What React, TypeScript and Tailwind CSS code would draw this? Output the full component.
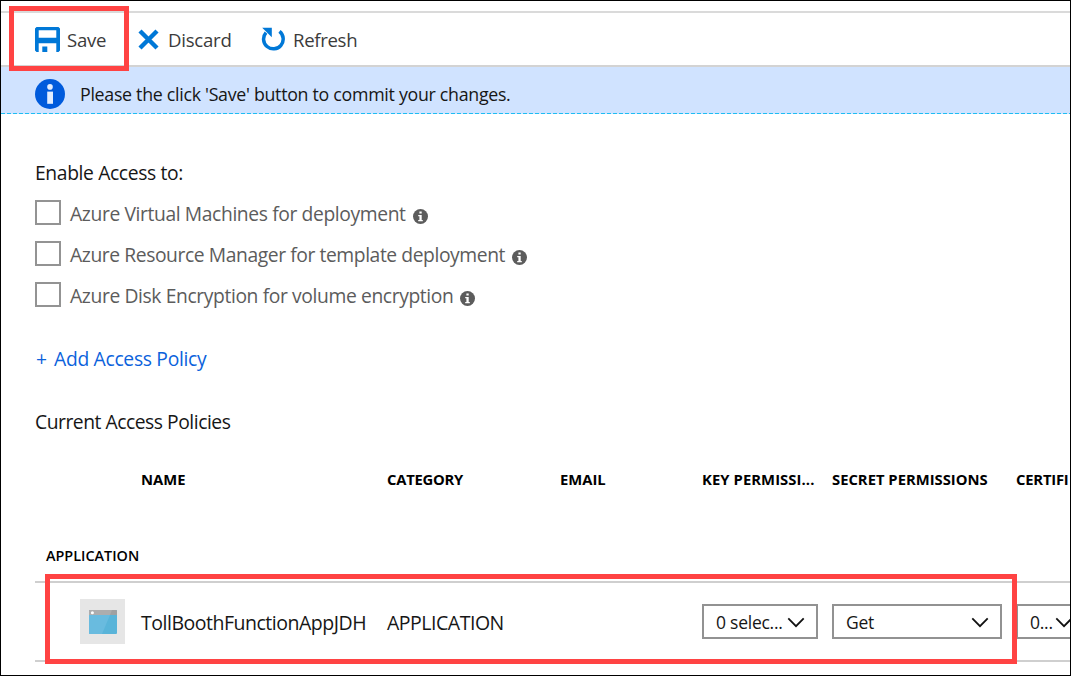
import React from "react";

function InfoDot({ className }: { className: string }) {
  return (
    <svg viewBox="0 0 30 30" className={className}>
      <circle cx="15" cy="15" r="15" fill="currentColor" />
      <circle cx="15" cy="7.9" r="2.8" fill="#e3eeff" />
      <path d="M12.2 12.6h5.8v12.2h-5.8z" fill="#e3eeff" />
    </svg>
  );
}

function SmallInfo() {
  return (
    <svg viewBox="0 0 15 15" className="mt-[6px] h-[15px] w-[15px] shrink-0">
      <circle cx="7.5" cy="7.5" r="7.5" fill="#5c5c5c" />
      <path d="M6.4 2.6h2.3v2H6.4zM5.2 5.9h3.5v5h1.1v1.3H5.2v-1.3h1.2V7.2H5.2z" fill="#fff" />
    </svg>
  );
}

function Chevron() {
  return (
    <svg viewBox="0 0 18 12" className="h-3 w-[18px] shrink-0" fill="none" stroke="#111" strokeWidth="1.8">
      <path d="M1.3 2.4 9 10.2l7.7-7.8" />
    </svg>
  );
}

function Check({ label, tracking }: { label: string; tracking: string }) {
  return (
    <div className="flex h-[41px] items-start">
      <div className="mt-px h-[25px] w-[26px] shrink-0 border-2 border-[#939393]" />
      <span className={"ml-[9px] mr-[7px] mt-px text-[19.3px] leading-[28px] text-[#5c5c5c] " + tracking}>{label}</span>
      <div className="pt-[4px]">
        <SmallInfo />
      </div>
    </div>
  );
}

function Select({ label, box }: { label: string; box: string }) {
  return (
    <div
      className={
        "flex h-[35px] shrink-0 items-center justify-between border-2 border-[#929292] bg-white pl-3 pr-[11px] text-[17.5px] tracking-[-0.25px] text-[#161616] " +
        box
      }
    >
      <span className="pt-[2px]">{label}</span>
      <Chevron />
    </div>
  );
}

export default function App() {
  return (
    <div className="relative flex h-[676px] w-[1071px] flex-col overflow-hidden whitespace-nowrap border border-black bg-white font-['Open_Sans',sans-serif] text-[#161616]">
      <div className="mt-[10px] flex h-[54px] shrink-0 items-center border-t-2 border-[#dadada] pl-[34px] text-[18.6px] tracking-[-0.25px] text-[#3b3b3b]">
        <svg viewBox="0 0 25 25" className="h-[25px] w-[25px]">
          <path
            fill="#0078d7"
            fillRule="evenodd"
            d="M1.5 0h22L25 1.5v22L23.5 25h-2.2v-8.7H3.7V25H1.5L0 23.5V1.5zM3.7 3.2v7.6h17.6V3.2zM7.3 19.5h5V25h-5z"
          />
        </svg>
        <span className="ml-[7px] w-[40px] pt-[2px]">Save</span>
        <svg viewBox="0 0 21 21" className="ml-[31px] h-[21px] w-[21px]" stroke="#0078d7" strokeWidth="4.4">
          <path d="M2 2l17 17M19 2 2 19" />
        </svg>
        <span className="ml-[9px] w-[64px] pt-[2px]">Discard</span>
        <svg viewBox="0 0 24 25" className="ml-[29px] h-[25px] w-6" fill="none">
          <path d="M18.5 4.4A9.8 9.8 0 1 1 5 5.6" stroke="#0078d7" strokeWidth="3.5" />
          <path d="M1.2.8h9.6v9.4z" fill="#0078d7" />
        </svg>
        <span className="ml-[8px] pt-[2px] tracking-[-0.32px]">Refresh</span>
      </div>

      <div className="flex h-[49px] shrink-0 flex-col border-t-2 border-t-[#d3d3d3] bg-[#d0e3ff]">
        <div className="flex h-[46px] items-center pl-[34px] pt-[8px]">
          <InfoDot className="h-[30px] w-[30px] text-[#005bdc]" />
          <span className="ml-[15px] pt-px text-[17.8px] tracking-[-0.29px]">
            Please the click 'Save' button to commit your changes.
          </span>
        </div>
        <div className="h-px bg-[repeating-linear-gradient(90deg,#1fbdf3_0px,#1fbdf3_4px,#d0e3ff_4px,#d0e3ff_6px)]" />
      </div>

      <div className="flex flex-col pl-[34px]">
        <div className="mt-[45px] h-[28px] text-[19.3px] leading-[28px] tracking-[-0.37px]">Enable Access to:</div>
        <div className="mt-[12px] flex flex-col">
          <Check label="Azure Virtual Machines for deployment" tracking="tracking-[-0.39px]" />
          <Check label="Azure Resource Manager for template deployment" tracking="tracking-[-0.42px]" />
          <Check label="Azure Disk Encryption for volume encryption" tracking="tracking-[-0.39px]" />
        </div>
        <div className="mt-[23px] flex h-[28px] text-[19.3px] leading-[28px] tracking-[-0.3px] text-[#0b62dc]">
          <span className="w-[19px] pl-px">+</span>
          <span>Add Access Policy</span>
        </div>
        <div className="mt-[35px] h-[28px] text-[19.3px] leading-[28px] tracking-[-0.47px]">Current Access Policies</div>

        <div className="mt-[33px] grid h-[20px] grid-cols-[106px_246px_173px_142px_130px_184px_54px] text-[14.8px] font-bold leading-[20px] text-black">
          <span />
          <span>NAME</span>
          <span className="tracking-[-0.25px]">CATEGORY</span>
          <span>EMAIL</span>
          <span className="tracking-[0.08px]">KEY PERMISSI...</span>
          <span>SECRET PERMISSIONS</span>
          <span className="tracking-[-0.2px]">CERTIFI</span>
        </div>

        <div className="mt-[57px] h-[20px] pl-[11px] text-[14.4px] font-semibold leading-[20px] text-black">APPLICATION</div>

        <div className="mt-[15px] grid h-[81px] grid-cols-[106px_246px_315px_130px_184px_100px] items-center border-b-2 border-t-2 border-[#cfcfcf] text-[19.5px] tracking-[-0.48px]">
          <div className="pl-[45px]">
            <div className="flex h-[45px] w-[45px] items-center justify-center bg-[#e6e6e6]">
              <svg viewBox="0 0 28 24" className="h-6 w-7">
                <rect width="28" height="24" rx="1" fill="#59b4d9" />
                <path d="M0 5h21L13 24H1a1 1 0 0 1-1-1z" fill="#69bbdf" />
                <path d="M1 0h26a1 1 0 0 1 1 1v4H0V1a1 1 0 0 1 1-1z" fill="#a0a1a2" />
                <path d="M1 0h22l-2 5H0V1a1 1 0 0 1 1-1z" fill="#adadae" />
                <circle cx="3.4" cy="2.8" r="1.5" fill="#fff" />
              </svg>
            </div>
          </div>
          <span className="pt-[2px]">TollBoothFunctionAppJDH</span>
          <span className="pt-[2px]">APPLICATION</span>
          <Select label="0 selec..." box="w-[116px]" />
          <Select label="Get" box="w-[170px]" />
          <Select label="0..." box="w-[70px]" />
        </div>
      </div>

      <div className="absolute left-[8px] top-[5px] h-[65px] w-[120px] border-[5px] border-[#ff4343]" />
      <div className="absolute left-[44px] top-[573px] h-[90px] w-[972px] border-[5px] border-[#ff4343]" />
    </div>
  );
}
